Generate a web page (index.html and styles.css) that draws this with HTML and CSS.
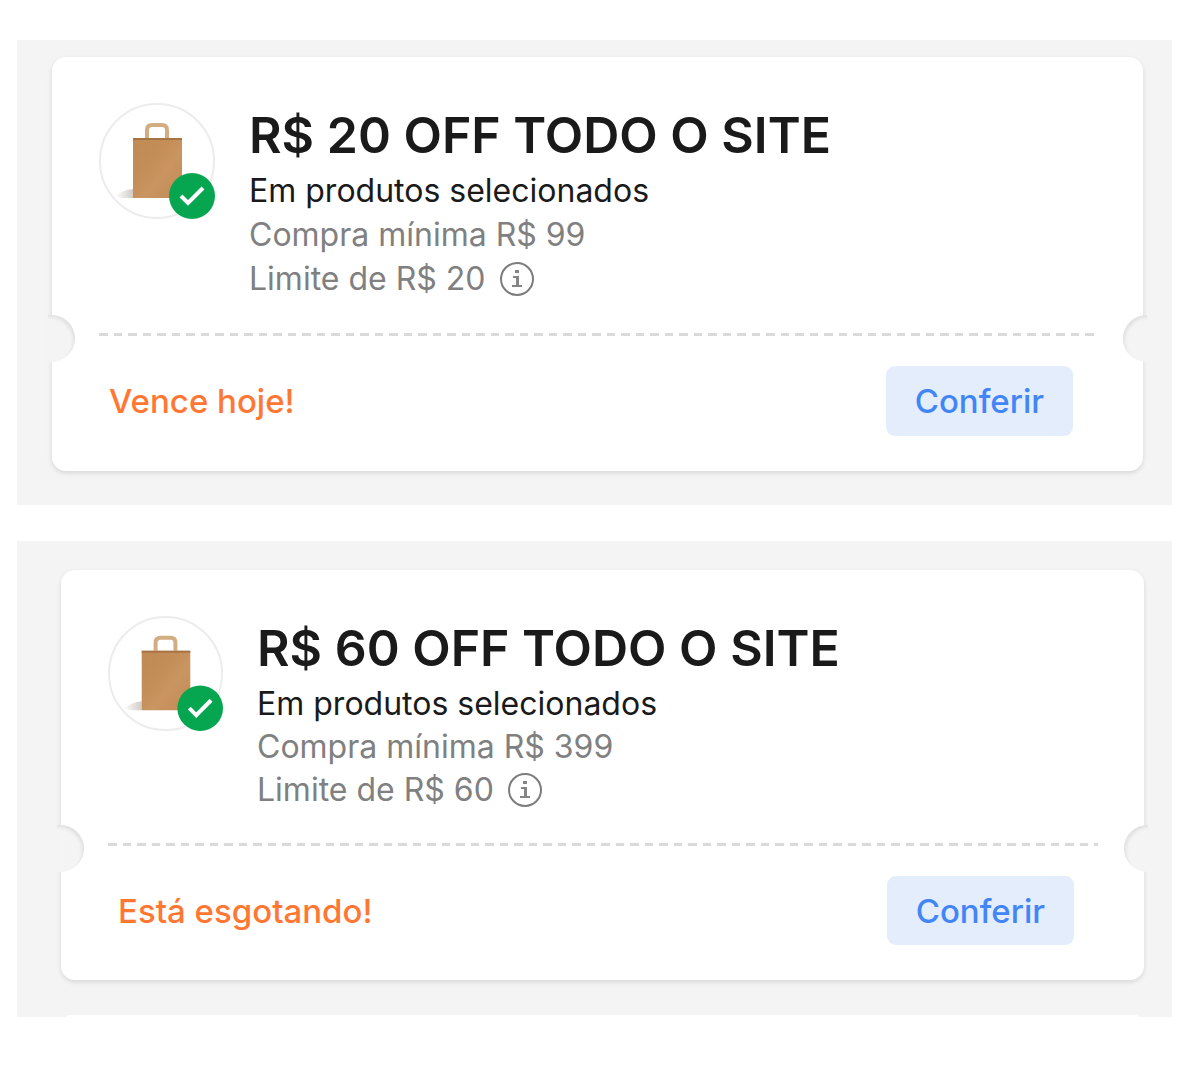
FILE: index.html
```html
<!DOCTYPE html>
<html lang="pt-BR">
<head>
<meta charset="utf-8">
<meta name="viewport" content="width=device-width, initial-scale=1">
<title>Cupons</title>
<link rel="stylesheet" href="styles.css">
</head>
<body>
<svg class="defs" aria-hidden="true">
  <defs>
    <linearGradient id="paper" x1="0" y1="0" x2="1" y2="1">
      <stop offset="0" stop-color="#c08a55"/>
      <stop offset="0.4" stop-color="#c48e58"/>
      <stop offset="0.6" stop-color="#c99561"/>
      <stop offset="1" stop-color="#c18a54"/>
    </linearGradient>
    <linearGradient id="shade" x1="0" y1="0" x2="1" y2="0">
      <stop offset="0" stop-color="#ffffff"/>
      <stop offset="1" stop-color="#d2cbc5"/>
    </linearGradient>
    <symbol id="bag" viewBox="0 0 116 116">
      <circle cx="58" cy="58" r="57" fill="#fff" stroke="#ececec" stroke-width="2"/>
      <path d="M16 93Q24 87 34 86V95H27Q20 95 16 93Z" fill="url(#shade)"/>
      <path d="M48 35V27Q48 22 53 22H63Q68 22 68 27V35" fill="none" stroke="#d3ad82" stroke-width="4"/>
      <path d="M34 35H83V95H34Z" fill="url(#paper)"/>
      <path d="M34 36H83" stroke="#a87443" stroke-width="2"/>
      <circle cx="93" cy="93" r="23" fill="#06a650"/>
      <path d="M82 93L89 100L104 85" fill="none" stroke="#fff" stroke-width="4"/>
    </symbol>
    <symbol id="info" viewBox="0 0 36 36">
      <circle cx="18" cy="18" r="16" fill="none" stroke="#7c7c7c" stroke-width="2"/>
      <path d="M16 9H20V12H16ZM14 15H20V24H23V26H13V24H17V17H14Z" fill="#858585"/>
    </symbol>
  </defs>
</svg>
<main class="page">
  <section class="panel">
    <article class="coupon">
      <div class="coupon-main">
        <svg class="bag" role="img" aria-label="Cupom ativado"><use href="#bag"/></svg>
        <div class="details">
          <h2 class="title">R$ 20 OFF TODO O SITE</h2>
          <p class="scope">Em produtos selecionados</p>
          <p class="rule">Compra mínima R$ 99</p>
          <p class="rule limit">Limite de R$ 20 <button class="info" type="button" aria-label="Mais informações"><svg><use href="#info"/></svg></button></p>
        </div>
      </div>
      <div class="tear"></div>
      <div class="coupon-foot">
        <p class="status">Vence hoje!</p>
        <button class="check" type="button">Conferir</button>
      </div>
    </article>
  </section>
  <section class="panel panel-last">
    <article class="coupon coupon-compact">
      <div class="coupon-main">
        <svg class="bag" role="img" aria-label="Cupom ativado"><use href="#bag"/></svg>
        <div class="details">
          <h2 class="title">R$ 60 OFF TODO O SITE</h2>
          <p class="scope">Em produtos selecionados</p>
          <p class="rule">Compra mínima R$ 399</p>
          <p class="rule limit">Limite de R$ 60 <button class="info" type="button" aria-label="Mais informações"><svg><use href="#info"/></svg></button></p>
        </div>
      </div>
      <div class="tear"></div>
      <div class="coupon-foot">
        <p class="status">Está esgotando!</p>
        <button class="check" type="button">Conferir</button>
      </div>
    </article>
    <div class="next-edge"></div>
  </section>
</main>
</body>
</html>
```

FILE: styles.css
```css
* {
  box-sizing: border-box;
}

body {
  margin: 0;
  background: #fff;
  color: #1a1a1a;
  font-family: Inter, "Liberation Sans", sans-serif;
  font-size: 32px;
}

h2,
p {
  margin: 0;
}

.defs {
  position: absolute;
  width: 0;
  height: 0;
}

.page {
  display: flex;
  flex-direction: column;
  gap: 36px;
  padding: 40px 18px 62px 17px;
}

.panel {
  padding: 17px 29px 34px 35px;
  background: #f4f4f4;
}

.panel-last {
  padding: 29px 28px 0 44px;
}

.coupon {
  --line: 44px;
  --button: 70px;
  --avatar: 116px;
  border-radius: 14px;
  background: #fff;
  box-shadow: 0 2px 5px rgba(0, 0, 0, 0.12);
}

.coupon-compact {
  --line: 43px;
  --button: 69px;
  --avatar: 115px;
}

.coupon-main {
  display: flex;
  gap: 34px;
  padding: 46px 46px 32px 47px;
}

.bag {
  flex: none;
  width: var(--avatar);
  height: var(--avatar);
}

.details {
  padding-top: 4px;
}

.title {
  margin-bottom: 6px;
  font-size: 50px;
  font-weight: 600;
  line-height: 56px;
}

.scope,
.rule {
  line-height: var(--line);
}

.rule {
  color: #808080;
}

.limit {
  display: flex;
  align-items: center;
  gap: 13px;
}

.info {
  display: block;
  width: 36px;
  height: 36px;
  padding: 0;
  border: 0;
  background: none;
}

.info svg {
  display: block;
  width: 36px;
  height: 36px;
}

.tear {
  position: relative;
  height: 3px;
  padding: 0 46px 0 47px;
  background: repeating-linear-gradient(90deg, #dadada 0 9px, transparent 9px 15px, #dadada 15px 23px, transparent 23px 29px) content-box;
}

.tear::before,
.tear::after {
  content: "";
  position: absolute;
  top: -18px;
  width: 27px;
  height: 47px;
  background: #f4f4f4;
}

.tear::before {
  left: -4px;
  border-radius: 0 24px 24px 0;
  box-shadow: inset -3px 3px 3px -1px #e2e2e2;
}

.tear::after {
  right: -4px;
  width: 24px;
  border-radius: 24px 0 0 24px;
  box-shadow: inset 3px 3px 3px -1px #e2e2e2;
}

.coupon-foot {
  display: flex;
  align-items: center;
  justify-content: space-between;
  padding: 30px 70px 35px 57px;
}

.status {
  color: #ff7733;
  font-size: 33px;
  font-weight: 500;
}

.check {
  height: var(--button);
  padding: 0 29px;
  border: 0;
  border-radius: 9px;
  background: #e3edfb;
  color: #4285f6;
  font: inherit;
  font-size: 33px;
  font-weight: 500;
}

.next-edge {
  height: 2px;
  margin: 35px 6px 0;
  border-radius: 14px 14px 0 0;
  background: #fff;
}
```
